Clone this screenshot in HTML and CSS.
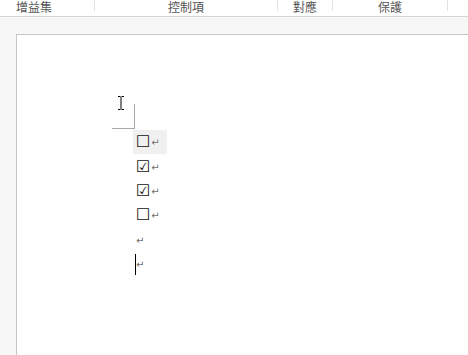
FILE: index.html
```html
<!DOCTYPE html>
<html lang="zh-Hant">
  <head>
    <meta charset="UTF-8" />
    <title>文件</title>
    <link rel="stylesheet" href="styles.css">
  </head>
  <body>
    <div class="ribbon">
      <div class="group first">增益集</div>
      <div class="group g2">控制項</div>
      <div class="group g3">對應</div>
      <div class="group g4">保護</div>
    </div>

    <div class="page">
      <svg class="ibeam" width="8" height="16" viewBox="0 0 8 16">
        <path d="M1 1.5h2.5M4.5 1.5h2.5M4 2v12M1 14.5h2.5M4.5 14.5h2.5" stroke="#000" stroke-width="1" fill="none"/>
      </svg>
      <div class="corner"></div>
      <div class="lines">
        <div class="row active"><span class="box">☐</span><span class="ret">↵</span></div>
        <div class="row"><span class="box">☑</span><span class="ret">↵</span></div>
        <div class="row"><span class="box">☑</span><span class="ret">↵</span></div>
        <div class="row"><span class="box">☐</span><span class="ret">↵</span></div>
        <div class="row empty"><span class="ret">↵</span></div>
        <div class="row empty"><span class="caret"></span><span class="ret">↵</span></div>
      </div>
    </div>
  </body>
</html>
```

FILE: styles.css
```css
body {
  margin: 0;
  height: 355px;
  overflow: hidden;
  background-color: #f7f7f7;
  font-family: "Noto Sans CJK TC", "DejaVu Sans", sans-serif;
}

.ribbon {
  display: flex;
  align-items: flex-start;
  height: 16px;
  background-color: #fff;
  border-bottom: 1px solid #d5d5d5;
}

.group {
  height: 11px;
  border-right: 1px solid #e2e2e2;
  font-size: 12px;
  line-height: 14px;
  color: #555;
  text-align: center;
}

.group.first {
  width: 95px;
  padding-left: 16px;
  box-sizing: border-box;
  text-align: left;
}

.g2 {
  width: 182px;
}

.g3 {
  width: 54px;
}

.g4 {
  width: 114px;
}

.page {
  position: relative;
  margin: 17px 0 0 16px;
  height: 320px;
  background-color: #fff;
  border: 1px solid #c6c6c6;
  border-right: none;
}

.ibeam {
  position: absolute;
  left: 100px;
  top: 60px;
}

.corner {
  width: 22px;
  height: 24px;
  margin: 69px 0 0 95px;
  border-right: 1px solid #a8a8a8;
  border-bottom: 1px solid #a8a8a8;
}

.lines {
  margin-top: 1px;
  padding-left: 116px;
}

.row {
  display: flex;
  align-items: center;
  width: 34px;
  height: 24.4px;
  padding-left: 3px;
  box-sizing: border-box;
}

.row.active {
  background-color: #f0f0f0;
}

.box {
  font-family: "DejaVu Sans", sans-serif;
  font-size: 16px;
  line-height: 16px;
  color: #111;
}

.ret {
  margin-left: 1px;
  font-family: "DejaVu Sans", sans-serif;
  font-size: 10px;
  line-height: 10px;
  color: #6e6e6e;
  padding-top: 2px;
}

.row.empty {
  padding-left: 2px;
}

.caret {
  width: 1px;
  height: 21px;
  background-color: #000;
  margin-right: -1px;
}
```
